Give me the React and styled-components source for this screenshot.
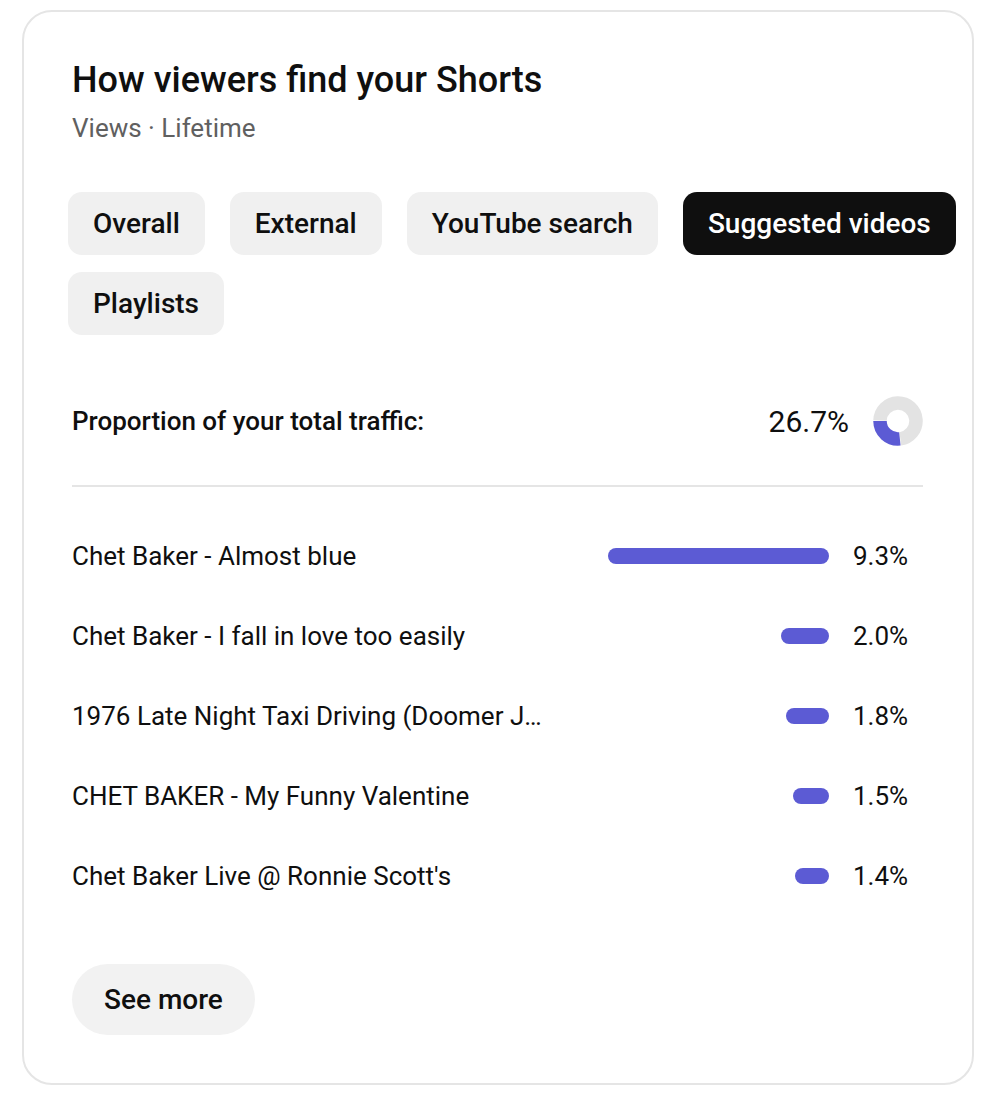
import React from "react";
import styled, { createGlobalStyle } from "styled-components";

const chips = ["Overall", "External", "YouTube search", "Suggested videos", "Playlists"];

const rows = [
  { title: "Chet Baker - Almost blue", pct: 9.3 },
  { title: "Chet Baker - I fall in love too easily", pct: 2.0 },
  { title: "1976 Late Night Taxi Driving (Doomer Jazz Mix)", pct: 1.8 },
  { title: "CHET BAKER - My Funny Valentine", pct: 1.5 },
  { title: "Chet Baker Live @ Ronnie Scott's", pct: 1.4 },
];

const MAX_BAR = 221;

function arcPath(cx, cy, r, a0, a1) {
  const p = (a) => {
    const rad = ((a - 90) * Math.PI) / 180;
    return [cx + r * Math.cos(rad), cy + r * Math.sin(rad)];
  };
  const [x0, y0] = p(a0);
  const [x1, y1] = p(a1);
  const large = a1 - a0 > 180 ? 1 : 0;
  return `M ${x0} ${y0} A ${r} ${r} 0 ${large} 1 ${x1} ${y1}`;
}

function Donut() {
  return (
    <svg width="50" height="50" viewBox="0 0 50 50">
      <path d={arcPath(25, 25, 18, 271.5, 360 + 172.5)} stroke="#e3e3e3" strokeWidth="13.5" fill="none" />
      <path d={arcPath(25, 25, 18, 174, 270)} stroke="#5c5bd4" strokeWidth="13.5" fill="none" />
    </svg>
  );
}

export default function App() {
  return (
    <>
      <GlobalStyle />
      <Card>
        <Title>How viewers find your Shorts</Title>
        <Subtitle>Views · Lifetime</Subtitle>
        <ChipRow>
          {chips.map((c) => (
            <Chip key={c} $active={c === "Suggested videos"}>
              {c}
            </Chip>
          ))}
        </ChipRow>
        <Proportion>
          <Label>Proportion of your total traffic:</Label>
          <Total>
            26.7%
            <Donut />
          </Total>
        </Proportion>
        <Divider />
        <List>
          {rows.map((r) => (
            <Row key={r.title}>
              <RowTitle>{r.title}</RowTitle>
              <BarTrack>
                <Bar style={{ width: Math.max(34, (MAX_BAR * r.pct) / 9.3) }} />
              </BarTrack>
              <Pct>{r.pct.toFixed(1)}%</Pct>
            </Row>
          ))}
        </List>
        <SeeMore>See more</SeeMore>
      </Card>
    </>
  );
}

const GlobalStyle = createGlobalStyle`
  body {
    margin: 0;
    background: #ffffff;
    font-family: Roboto, "Liberation Sans", sans-serif;
    color: #0f0f0f;
  }
`;

const Card = styled.div`
  box-sizing: border-box;
  width: 952px;
  margin: 10px 0 0 22px;
  padding: 48px 49px 48px 48px;
  border: 2px solid #e5e5e5;
  border-radius: 30px;
  display: flex;
  flex-direction: column;
`;

const Title = styled.h1`
  margin: 0;
  font-size: 36px;
  font-weight: 500;
  line-height: 40px;
  color: #0f0f0f;
`;

const Subtitle = styled.div`
  margin-top: 13px;
  font-size: 26px;
  line-height: 30px;
  color: #606060;
`;

const ChipRow = styled.div`
  display: flex;
  flex-wrap: wrap;
  column-gap: 25px;
  row-gap: 17px;
  margin: 49px -40px 0 -4px;
`;

const Chip = styled.button`
  height: 63px;
  padding: 0 25px;
  border: none;
  border-radius: 14px;
  font-family: Roboto, "Liberation Sans", sans-serif;
  font-size: 28px;
  font-weight: 500;
  background: ${(p) => (p.$active ? "#0f0f0f" : "#f0f0f0")};
  color: ${(p) => (p.$active ? "#ffffff" : "#0f0f0f")};
`;

const Proportion = styled.div`
  display: flex;
  align-items: center;
  justify-content: space-between;
  margin-top: 61px;
  padding-bottom: 39px;
`;

const Label = styled.div`
  font-size: 26px;
  font-weight: 500;
  color: #0f0f0f;
`;

const Total = styled.div`
  display: flex;
  align-items: center;
  gap: 24px;
  font-size: 30px;
  color: #0f0f0f;
`;

const Divider = styled.div`
  height: 2px;
  background: #e5e5e5;
`;

const List = styled.div`
  display: flex;
  flex-direction: column;
  margin-top: 29px;
`;

const Row = styled.div`
  display: flex;
  align-items: center;
  height: 80px;
`;

const RowTitle = styled.div`
  width: 472px;
  white-space: nowrap;
  overflow: hidden;
  text-overflow: ellipsis;
  font-size: 26px;
  color: #0f0f0f;
`;

const BarTrack = styled.div`
  flex: 1;
  display: flex;
  justify-content: flex-end;
`;

const Bar = styled.div`
  height: 16px;
  border-radius: 8px;
  background: #5c5bd4;
`;

const Pct = styled.div`
  width: 70px;
  margin-left: 24px;
  font-size: 26px;
  color: #0f0f0f;
`;

const SeeMore = styled.button`
  align-self: flex-start;
  margin-top: 48px;
  height: 71px;
  padding: 0 32px;
  border: none;
  border-radius: 36px;
  background: #f2f2f2;
  font-family: Roboto, "Liberation Sans", sans-serif;
  font-size: 28px;
  font-weight: 500;
  color: #0f0f0f;
`;
